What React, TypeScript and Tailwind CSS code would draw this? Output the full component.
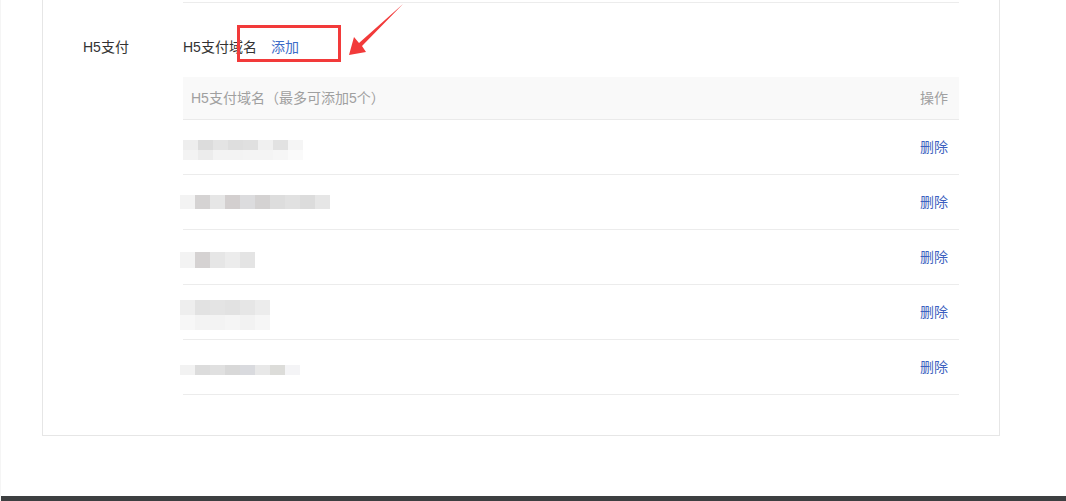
import React from "react";

type Blur = { top: number; x: number; rows: string[][]; h: number };

const blurs: Blur[] = [
  {
    top: 20,
    x: 0,
    h: 10,
    rows: [
      ["#eeeeee", "#dcdcdc", "#e4e4e4", "#dedede", "#e0e0e0", "#f0f0f0", "#e2e2e2", "#f5f5f5"],
      ["#f3f3f3", "#ececec", "#f3f3f3", "#f3f3f3", "#f4f4f4", "#f4f4f4", "#f6f6f6", "#fafafa"],
    ],
  },
  {
    top: 20,
    x: -3,
    h: 14,
    rows: [["#f3f3f3", "#d5d3d3", "#e6e6e6", "#d3cfcf", "#dcdcde", "#d4d2d2", "#dddddd", "#e1e1e1", "#dcdcdc", "#e6e6e6"]],
  },
  {
    top: 22,
    x: -3,
    h: 16,
    rows: [["#f3f3f3", "#d5d2d2", "#e6e6e6", "#ececec", "#e4e4e4"]],
  },
  {
    top: 15,
    x: -3,
    h: 15,
    rows: [
      ["#eeeeee", "#e2e2e2", "#e4e4e4", "#e2e2e2", "#e6e6e6", "#ececec"],
      ["#f7f7f7", "#f3f3f3", "#f3f3f3", "#f5f5f5", "#f2f2f2", "#f6f6f6"],
    ],
  },
  {
    top: 25,
    x: -3,
    h: 10,
    rows: [["#f2f2f2", "#dcdcdc", "#e0e0e0", "#d8d8d8", "#d9dade", "#e8e8e8", "#dcdcd9", "#f4f4f6"]],
  },
];

function BlurBlock({ b }: { b: Blur }) {
  return (
    <div className="flex flex-col" style={{ marginTop: b.top, marginLeft: b.x }}>
      {b.rows.map((r, i) => (
        <div key={i} className="flex">
          {r.map((c, j) => (
            <div key={j} className="w-[15px]" style={{ background: c, height: b.h }} />
          ))}
        </div>
      ))}
    </div>
  );
}

export default function App() {
  return (
    <div
      className="relative w-[1066px] h-[501px] bg-white flex flex-col overflow-hidden border-l border-[#f5f5f5]"
      style={{ fontFamily: '"Liberation Sans", "Noto Sans CJK SC", sans-serif' }}
    >
      <div className="ml-[41px] w-[958px] h-[436px] border-x border-b border-[#e6e6e6] pl-[40px] flex flex-col">
        <div className="ml-[100px] w-[776px] h-[3px] border-b border-[#ececec]" />
        <div className="flex mt-[32px] h-[24px] items-center text-[14px] text-[#333]">
          <div className="w-[100px]">H5支付</div>
          <div className="flex items-center">
            <span>H5支付域名</span>
            <span className="ml-[14px] text-[#3d6cc8]">添加</span>
          </div>
        </div>
        <div className="ml-[100px] w-[776px] mt-[18px] flex flex-col text-[14px]">
          <div className="h-[43px] bg-[#f9f9f9] border-b border-[#eaeaea] flex items-center justify-between pl-[8px] pr-[11px] text-[#a0a0a0]">
            <span>H5支付域名（最多可添加5个）</span>
            <span>操作</span>
          </div>
          {blurs.map((b, i) => (
            <div key={i} className="h-[55px] border-b border-[#ececec] flex justify-between">
              <BlurBlock b={b} />
              <span className="self-center pr-[11px] text-[#3d5fc0]">删除</span>
            </div>
          ))}
        </div>
      </div>
      <div className="mt-auto h-[5px] bg-[#3d3f41]" />

      <div className="absolute left-[236px] top-[25px] w-[104px] h-[37px] border-[3px] border-[#f23a3a]" />
      <svg className="absolute left-0 top-0" width="1066" height="80" viewBox="0 0 1066 80">
        <polygon points="348,55 353,37 358,43 402,4 361,46 365,52" fill="#f23a3a" />
      </svg>
    </div>
  );
}
